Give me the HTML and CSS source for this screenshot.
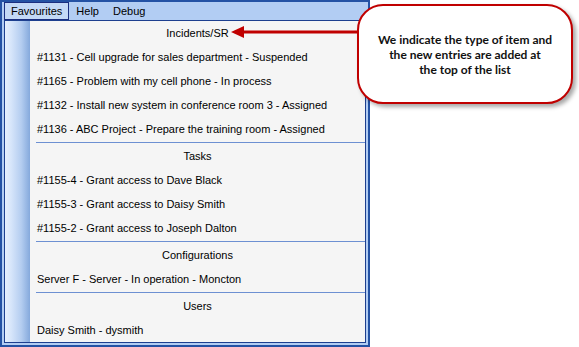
FILE: index.html
```html
<!DOCTYPE html>
<html lang="en">
<head>
    <meta charset="UTF-8">
    <meta name="viewport" content="width=device-width, initial-scale=1.0">
    <title>Favourites</title>
    <link rel="stylesheet" href="styles.css">
</head>
<body>
  <div class="app">
    <div class="menubar">
      <span class="menu_item active">Favourites</span>
      <span class="menu_item">Help</span>
      <span class="menu_item">Debug</span>
    </div>
    <div class="dropdown">
      <div class="strip"></div>
      <div class="entries">
        <div class="group">Incidents/SR</div>
        <div class="entry">#1131 - Cell upgrade for sales department - Suspended</div>
        <div class="entry">#1165 - Problem with my cell phone - In process</div>
        <div class="entry">#1132 - Install new system in conference room 3 - Assigned</div>
        <div class="entry">#1136 - ABC Project - Prepare the training room - Assigned</div>
        <div class="sep"></div>
        <div class="group">Tasks</div>
        <div class="entry">#1155-4 - Grant access to Dave Black</div>
        <div class="entry">#1155-3 - Grant access to Daisy Smith</div>
        <div class="entry">#1155-2 - Grant access to Joseph Dalton</div>
        <div class="sep"></div>
        <div class="group">Configurations</div>
        <div class="entry">Server F - Server - In operation - Moncton</div>
        <div class="sep"></div>
        <div class="group">Users</div>
        <div class="entry">Daisy Smith - dysmith</div>
      </div>
    </div>
  </div>

  <!-- annotation over the screenshot -->
  <div class="arrow">
    <svg width="126" height="14" viewBox="0 0 126 14">
      <polygon points="0,7 13,1 13,13" fill="#c00000"/>
      <rect x="12" y="5.5" width="114" height="3" fill="#c00000"/>
    </svg>
  </div>
  <div class="callout">
    We indicate the type of item and<br>
    the new entries are added at<br>
    the top of the list
  </div>
</body>
</html>
```

FILE: styles.css
```css
body {
    margin: 0;
    background-color: #fff;
    position: relative;
    width: 579px;
    height: 347px;
    overflow: hidden;
    font-family: "Liberation Sans", Arial, sans-serif;
    font-size: 11px;
    color: #000;
}

.app {
    width: 366px;
    height: 343px;
    border: 2px solid #2452a4;
    background-color: #b2cdf3;
    display: flex;
    flex-direction: column;
}

.menubar {
    height: 18px;
    display: flex;
    align-items: stretch;
    padding-left: 2px;
}

.menu_item {
    display: flex;
    align-items: center;
    padding: 0 6px;
    border: 1px solid transparent;
    font-size: 11px;
}

.menu_item.active {
    border-color: #1b2f80;
    background-color: #c4d9f6;
}

.dropdown {
    display: flex;
    margin: 0 2px 0 2px;
    height: 321px;
    border: 1px solid #1d3f8f;
    background-color: #f5f5f5;
}

.strip {
    width: 25px;
    background: linear-gradient(to right, #e6f0fd 0%, #d6e5fa 25%, #b4cdf0 65%, #85a9dc 100%);
}

.entries {
    flex: 1;
    display: flex;
    flex-direction: column;
}

.group, .entry {
    height: 24px;
    line-height: 25px;
    white-space: nowrap;
}

.group {
    text-align: center;
}

.entry {
    padding-left: 7px;
}

.sep {
    height: 1px;
    margin: 1px 0 1px 6px;
    background-color: #6d90d2;
}

.arrow {
    position: absolute;
    left: 231px;
    top: 25px;
    line-height: 0;
}

.callout {
    position: absolute;
    left: 357px;
    top: 4px;
    width: 212px;
    height: 96px;
    border: 2px solid #c00000;
    border-radius: 26px;
    background-color: #fff;
    box-shadow: 3px 3px 4px rgba(0, 0, 0, 0.35);
    display: flex;
    align-items: center;
    justify-content: center;
    text-align: center;
    font-family: Lato, "Liberation Sans", sans-serif;
    font-weight: bold;
    font-size: 12px;
    line-height: 15px;
    color: #111;
}
```
